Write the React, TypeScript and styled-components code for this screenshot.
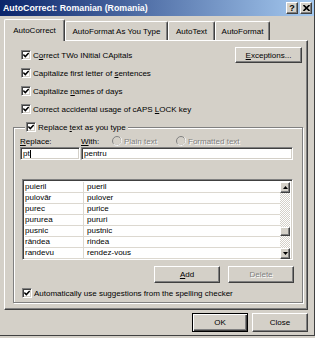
import styled, { createGlobalStyle, css } from 'styled-components';

const FACE = '#d4d0c8';
const SHADOW = '#808080';
const DARK = '#404040';
const HILITE = '#ffffff';

const GlobalStyle = createGlobalStyle`
  * { box-sizing: border-box; }
  html, body { margin: 0; padding: 0; background: ${FACE}; }
  body {
    font-family: 'Liberation Sans', Arial, sans-serif;
    font-size: 8px;
    color: #000;
  }
`;

const raised = css`
  border: 1px solid;
  border-color: ${HILITE} ${DARK} ${DARK} ${HILITE};
  box-shadow: inset -1px -1px ${SHADOW}, inset 1px 1px ${FACE};
  background: ${FACE};
`;

const sunken = css`
  border: 1px solid;
  border-color: ${SHADOW} ${HILITE} ${HILITE} ${SHADOW};
  box-shadow: inset 1px 1px ${DARK}, inset -1px -1px ${FACE};
  background: #fff;
`;

const Window = styled.div`
  width: 315px;
  height: 336px;
  background: ${FACE};
  border-right: 1px solid ${DARK};
  border-bottom: 1px solid ${DARK};
  display: flex;
  flex-direction: column;
`;

const TitleBar = styled.div`
  height: 16px;
  padding: 0 2px 0 3px;
  display: flex;
  align-items: center;
  justify-content: space-between;
  background: linear-gradient(to right, #0a246a, #a6caf0);
`;

const TitleText = styled.span`
  color: #fff;
  font-weight: bold;
  font-size: 8.8px;
`;

const CaptionButtons = styled.div`
  display: flex;
  gap: 2px;
`;

const CaptionButton = styled.div`
  ${raised};
  width: 12px;
  height: 12px;
  display: flex;
  align-items: center;
  justify-content: center;
  font-weight: bold;
  font-size: 9px;
  line-height: 1;
`;

const TabStrip = styled.div`
  margin-top: 3px;
  margin-bottom: -1px;
  height: 22px;
  padding-left: 4px;
  display: flex;
  align-items: flex-end;
`;

const Tab = styled.div<{ $w: number; $active?: boolean }>`
  position: relative;
  width: ${(p) => p.$w}px;
  height: ${(p) => (p.$active ? 22 : 19)}px;
  margin-bottom: ${(p) => (p.$active ? 0 : 1)}px;
  padding-top: ${(p) => (p.$active ? 6 : 5)}px;
  text-align: center;
  background: ${FACE};
  border-top: 1px solid ${HILITE};
  border-left: 1px solid ${HILITE};
  border-right: 1px solid ${DARK};
  border-radius: 2px 2px 0 0;
  box-shadow: inset -1px 0 ${SHADOW};
  z-index: ${(p) => (p.$active ? 2 : 0)};
`;

const Panel = styled.div`
  margin: 0 6px 0 4px;
  height: 270px;
  padding: 5px 4px 0 8px;
  border-top: 1px solid ${HILITE};
  border-left: 1px solid ${HILITE};
  border-right: 1px solid ${DARK};
  border-bottom: 1px solid ${DARK};
  box-shadow: inset -1px -1px ${SHADOW};
  display: flex;
  flex-direction: column;
`;

const TopRow = styled.div`
  display: flex;
  align-items: center;
  justify-content: space-between;
  padding-right: 1px;
`;

const CheckRow = styled.label<{ $indent?: number; $h?: number; $mt?: number }>`
  height: ${(p) => p.$h ?? 18}px;
  margin-top: ${(p) => p.$mt ?? 0}px;
  display: flex;
  align-items: center;
  gap: 2px;
  padding-left: ${(p) => p.$indent ?? 8}px;
`;

const Box = styled.span`
  ${sunken};
  width: 10px;
  height: 10px;
  flex: none;
  display: flex;
  align-items: center;
  justify-content: center;
`;

const Key = styled.span`
  text-decoration: underline;
`;

const PushButton = styled.div<{ $w: number; $h?: number; $default?: boolean; $disabled?: boolean }>`
  ${raised};
  width: ${(p) => p.$w}px;
  height: ${(p) => p.$h ?? 16}px;
  display: flex;
  align-items: center;
  justify-content: center;
  color: ${(p) => (p.$disabled ? SHADOW : '#000')};
  text-shadow: ${(p) => (p.$disabled ? `1px 1px ${HILITE}` : 'none')};
  ${(p) =>
    p.$default &&
    css`
      border: 1px solid #000;
      box-shadow: inset 1px 1px ${HILITE}, inset -1px -1px ${DARK}, inset -2px -2px ${SHADOW};
    `}
`;

const Group = styled.fieldset`
  margin: 3px 0 0 0;
  padding: 0 8px 2px 6px;
  min-width: 0;
  border: 1px solid ${SHADOW};
  box-shadow: inset 1px 1px ${HILITE}, 1px 1px ${HILITE};
`;

const Legend = styled.legend`
  margin-left: 5px;
  padding: 0 2px 0 1px;
  height: 12px;
  display: flex;
  align-items: center;
  gap: 2px;
  background: ${FACE};
`;

const LabelsRow = styled.div`
  height: 14px;
  padding-top: 2px;
  display: grid;
  grid-template-columns: 61px 31px 64px auto;
  align-items: center;
`;

const Radio = styled.span`
  display: flex;
  align-items: center;
  gap: 2px;
  color: ${SHADOW};
  text-shadow: 1px 1px ${HILITE};
`;

const InputsRow = styled.div`
  display: grid;
  grid-template-columns: 60px 212px;
  gap: 1px;
`;

const TextBox = styled.div`
  ${sunken};
  height: 13px;
  padding: 0 2px;
  line-height: 11px;
  display: flex;
  align-items: center;
`;

const Caret = styled.span`
  width: 1px;
  height: 8px;
  background: #000;
`;

const ListBox = styled.div`
  ${sunken};
  margin: 19px 0 0 2px;
  width: 271px;
  height: 81px;
  padding: 2px 2px 0 2px;
  display: flex;
  overflow: hidden;
`;

const Rows = styled.div`
  flex: 1;
`;

const ListRow = styled.div`
  display: grid;
  grid-template-columns: 58px 1fr;
  height: 11px;
  line-height: 10px;
  border-bottom: 1px solid #dcd8d0;
`;

const Cell = styled.span`
  padding-left: 0;
  & + & {
    border-left: 1px solid #dcd8d0;
    padding-left: 3px;
  }
`;

const ScrollBar = styled.div`
  width: 10px;
  height: 77px;
  display: flex;
  flex-direction: column;
`;

const Arrow = styled.div`
  ${raised};
  height: 11px;
  display: flex;
  align-items: center;
  justify-content: center;
  flex: none;
`;

const Track = styled.div`
  flex: 1;
  background: repeating-conic-gradient(#fff 0 25%, ${FACE} 0 50%) 0 0 / 2px 2px;
`;

const Thumb = styled.div<{ $offset: number }>`
  ${raised};
  margin-top: ${(p) => p.$offset}px;
  height: 9px;
`;

const ActionRow = styled.div`
  margin-top: 6px;
  display: flex;
  justify-content: flex-end;
  gap: 8px;
`;

const DialogButtons = styled.div`
  margin-top: 3px;
  padding-right: 6px;
  display: flex;
  justify-content: flex-end;
  gap: 4px;
`;

const Check = () => (
  <Box>
    <svg width="6" height="6" viewBox="0 0 6 6">
      <polyline points="0.3,2.6 2.3,4.6 5.7,1" fill="none" stroke="#000" strokeWidth="1.5" />
    </svg>
  </Box>
);

const RadioDot = () => (
  <svg width="10" height="10" viewBox="0 0 10 10">
    <circle cx="5" cy="5" r="4.5" fill={FACE} stroke={SHADOW} />
    <path d="M1.5 8 A4.5 4.5 0 0 0 8.5 1.5" fill="none" stroke={HILITE} />
  </svg>
);

const ENTRIES: [string, string][] = [
  ['puieril', 'pueril'],
  ['pulovăr', 'pulover'],
  ['purec', 'purice'],
  ['pururea', 'pururi'],
  ['pusnic', 'pustnic'],
  ['rândea', 'rindea'],
  ['randevu', 'rendez-vous'],
];

const App = () => {
  return (
    <>
      <GlobalStyle />
      <Window>
        <TitleBar>
          <TitleText>AutoCorrect: Romanian (Romania)</TitleText>
          <CaptionButtons>
            <CaptionButton>?</CaptionButton>
            <CaptionButton>
              <svg width="7" height="6" viewBox="0 0 7 6">
                <path d="M0.5 0 L6.5 6 M6.5 0 L0.5 6" stroke="#000" strokeWidth="1.6" />
              </svg>
            </CaptionButton>
          </CaptionButtons>
        </TitleBar>

        <TabStrip>
          <Tab $w={61} $active>AutoCorrect</Tab>
          <Tab $w={103}>AutoFormat As You Type</Tab>
          <Tab $w={47}>AutoText</Tab>
          <Tab $w={55}>AutoFormat</Tab>
        </TabStrip>

        <Panel>
          <TopRow>
            <CheckRow>
              <Check />
              <span>
                C<Key>o</Key>rrect TWo INitial CApitals
              </span>
            </CheckRow>
            <PushButton $w={67}>
              <span>
                <Key>E</Key>xceptions...
              </span>
            </PushButton>
          </TopRow>
          <CheckRow>
            <Check />
            <span>
              Capitalize first letter of <Key>s</Key>entences
            </span>
          </CheckRow>
          <CheckRow>
            <Check />
            <span>
              Capitalize <Key>n</Key>ames of days
            </span>
          </CheckRow>
          <CheckRow>
            <Check />
            <span>
              Correct accidental usage of cAPS <Key>L</Key>OCK key
            </span>
          </CheckRow>

          <Group>
            <Legend>
              <Check />
              <span>
                Replace <Key>t</Key>ext as you type
              </span>
            </Legend>
            <LabelsRow>
              <span>
                <Key>R</Key>eplace:
              </span>
              <span>
                <Key>W</Key>ith:
              </span>
              <Radio>
                <RadioDot />
                <span>Plain text</span>
              </Radio>
              <Radio>
                <RadioDot />
                <span>Formatted text</span>
              </Radio>
            </LabelsRow>
            <InputsRow>
              <TextBox>
                pt
                <Caret />
              </TextBox>
              <TextBox>pentru</TextBox>
            </InputsRow>

            <ListBox>
              <Rows>
                {ENTRIES.map(([from, to]) => (
                  <ListRow key={from}>
                    <Cell>{from}</Cell>
                    <Cell>{to}</Cell>
                  </ListRow>
                ))}
              </Rows>
              <ScrollBar>
                <Arrow>
                  <svg width="5" height="3" viewBox="0 0 5 3">
                    <path d="M2.5 0 L5 3 L0 3 Z" fill="#000" />
                  </svg>
                </Arrow>
                <Track>
                  <Thumb $offset={34} />
                </Track>
                <Arrow>
                  <svg width="5" height="3" viewBox="0 0 5 3">
                    <path d="M0 0 L5 0 L2.5 3 Z" fill="#000" />
                  </svg>
                </Arrow>
              </ScrollBar>
            </ListBox>

            <ActionRow>
              <PushButton $w={66} $h={17}>
                <span>
                  <Key>A</Key>dd
                </span>
              </PushButton>
              <PushButton $w={66} $h={17} $disabled>
                Delete
              </PushButton>
            </ActionRow>

            <CheckRow $indent={2} $h={14} $mt={3}>
              <Check />
              <span>Automatically use suggestions from the spelling checker</span>
            </CheckRow>
          </Group>
        </Panel>

        <DialogButtons>
          <PushButton $w={56} $h={19} $default>
            OK
          </PushButton>
          <PushButton $w={56} $h={19}>
            Close
          </PushButton>
        </DialogButtons>
      </Window>
    </>
  );
};

export default App;
